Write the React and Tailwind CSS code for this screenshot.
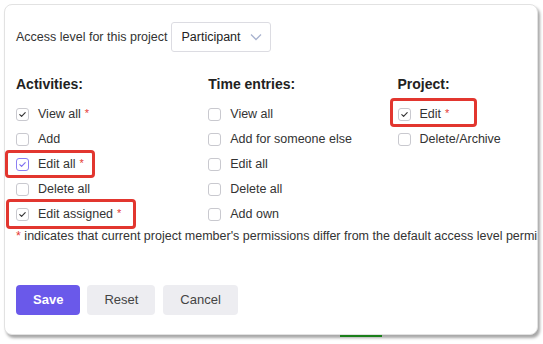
import React from "react";

const font = { fontFamily: '"Liberation Sans", Arial, sans-serif' };

function Check({ purple }) {
  return (
    <span
      className={`flex h-[13px] w-[13px] shrink-0 items-center justify-center rounded-[3px] border bg-white ${
        purple ? "border-[#8b7ff2]" : "border-[#c9c9cf]"
      }`}
    >
      <svg width="11" height="11" viewBox="0 0 11 11" fill="none">
        <path
          d="M2.8 5.6 L4.6 7.4 L8.2 3.6"
          stroke={purple ? "#7b6cf0" : "#333"}
          strokeWidth="1.1"
          strokeLinecap="round"
          strokeLinejoin="round"
        />
      </svg>
    </span>
  );
}

function Empty() {
  return (
    <span className="h-[13px] w-[13px] shrink-0 rounded-[3px] border border-[#c9c9cf] bg-white" />
  );
}

function Row({ label, checked, star, purple, box }) {
  return (
    <div className="flex h-[25px] items-center">
      <div className="relative flex items-center">
        {box && (
          <span
            className={`pointer-events-none absolute rounded-[4px] border-[3px] border-[#e2362f] ${box}`}
          />
        )}
        {checked ? <Check purple={purple} /> : <Empty />}
        <span className="ml-[9px] text-[12.5px] leading-none text-[#333]">{label}</span>
        {star && <span className="ml-[4px] text-[11px] leading-none text-[#e53935] -mt-[2px]">*</span>}
      </div>
    </div>
  );
}

function Column({ title, children, className }) {
  return (
    <div className={className}>
      <div className="flex h-[20px] items-center text-[14px] font-bold text-[#222]">{title}</div>
      <div className="mt-[8px] flex flex-col">{children}</div>
    </div>
  );
}

export default function App() {
  return (
    <div className="h-[344px] w-[543px] overflow-hidden bg-white pl-[4px] pt-[4px]" style={font}>
      <div className="flex h-[331px] w-[534px] flex-col overflow-hidden rounded-[8px] border border-[#e2e2e2] bg-white pl-[11px] pt-[17px] shadow-[2px_3px_3px_rgba(0,0,0,0.35)]">
        <div className="flex items-center">
          <span className="text-[12.5px] text-[#333]">Access level for this project</span>
          <div className="ml-[4px] flex h-[30px] w-[100px] items-center justify-between rounded-[3px] border border-[#dcdce2] pl-[9px] pr-[8px]">
            <span className="text-[12.5px] text-[#222]">Participant</span>
            <svg width="12" height="8" viewBox="0 0 12 8" fill="none">
              <path d="M1 1.5 L6 6.5 L11 1.5" stroke="#a9b3cf" strokeWidth="1.3" />
            </svg>
          </div>
        </div>

        <div className="mt-[22px] flex">
          <Column title="Activities:" className="w-[193px]">
            <Row label="View all" checked star />
            <Row label="Add" />
            <Row label="Edit all" checked star purple box="-left-[11px] -top-[8px] h-[28px] w-[90px]" />
            <Row label="Delete all" />
            <Row label="Edit assigned" checked star box="-left-[10px] -top-[9px] h-[30px] w-[130px]" />
          </Column>
          <Column title="Time entries:" className="w-[190px]">
            <Row label="View all" />
            <Row label="Add for someone else" />
            <Row label="Edit all" />
            <Row label="Delete all" />
            <Row label="Add own" />
          </Column>
          <Column title="Project:" className="w-[140px]">
            <Row label="Edit" checked star box="-left-[8px] -top-[10px] h-[29px] w-[87px]" />
            <Row label="Delete/Archive" />
          </Column>
        </div>

        <div className="mt-[2px] whitespace-nowrap text-[12.5px] leading-[14px] text-[#333]">
          <span className="text-[#e53935]">*</span> indicates that current project member's permissions differ from the default access level permissions
        </div>

        <div className="mt-[42px] flex gap-[7px]">
          <button className="h-[30px] rounded-[4px] bg-[#6a59ea] px-[17px] text-[13px] font-bold text-white">Save</button>
          <button className="h-[30px] rounded-[4px] bg-[#ededf1] px-[17px] text-[13px] text-[#444]">Reset</button>
          <button className="ml-[1px] h-[30px] rounded-[4px] bg-[#ededf1] px-[17px] text-[13px] text-[#444]">Cancel</button>
        </div>
      </div>
      <div className="ml-[336px] h-[2px] w-[42px] bg-[#1a7f1a]" />
    </div>
  );
}
